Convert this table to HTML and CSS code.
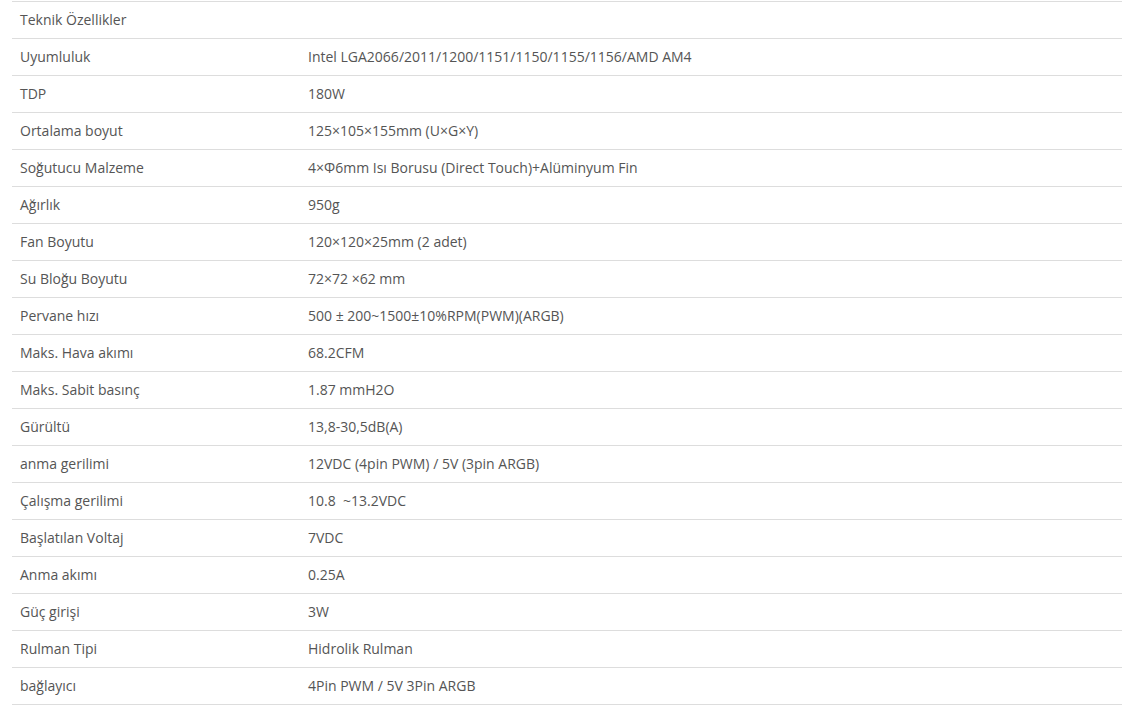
FILE: index.html
```html
<!DOCTYPE html>
<html lang="tr">

<head>
    <meta charset="UTF-8">
    <meta name="viewport" content="width=device-width, initial-scale=1.0">
    <link rel="stylesheet" href="styles.css">
    <title>Teknik Özellikler</title>
</head>

<body>
    <div class="specs">
        <table class="spectable">
            <tr><td>Teknik Özellikler</td><td></td></tr>
            <tr><td>Uyumluluk</td><td>Intel LGA2066/2011/1200/1151/1150/1155/1156/AMD AM4</td></tr>
            <tr><td>TDP</td><td>180W</td></tr>
            <tr><td>Ortalama boyut</td><td>125×105×155mm (U×G×Y)</td></tr>
            <tr><td>Soğutucu Malzeme</td><td>4×Φ6mm Isı Borusu (Direct Touch)+Alüminyum Fin</td></tr>
            <tr><td>Ağırlık</td><td>950g</td></tr>
            <tr><td>Fan Boyutu</td><td>120×120×25mm (2 adet)</td></tr>
            <tr><td>Su Bloğu Boyutu</td><td>72×72 ×62 mm</td></tr>
            <tr><td>Pervane hızı</td><td>500 ± 200~1500±10%RPM(PWM)(ARGB)</td></tr>
            <tr><td>Maks. Hava akımı</td><td>68.2CFM</td></tr>
            <tr><td>Maks. Sabit basınç</td><td>1.87 mmH2O</td></tr>
            <tr><td>Gürültü</td><td>13,8-30,5dB(A)</td></tr>
            <tr><td>anma gerilimi</td><td>12VDC (4pin PWM) / 5V (3pin ARGB)</td></tr>
            <tr><td>Çalışma gerilimi</td><td>10.8 &nbsp;~13.2VDC</td></tr>
            <tr><td>Başlatılan Voltaj</td><td>7VDC</td></tr>
            <tr><td>Anma akımı</td><td>0.25A</td></tr>
            <tr><td>Güç girişi</td><td>3W</td></tr>
            <tr><td>Rulman Tipi</td><td>Hidrolik Rulman</td></tr>
            <tr><td>bağlayıcı</td><td>4Pin PWM / 5V 3Pin ARGB</td></tr>
        </table>
    </div>
</body>

</html>
```
FILE: styles.css
```css
* {
    padding: 0;
    margin: 0;
}

body {
    background-color: white;
    font-family: "Open Sans", sans-serif;
    font-size: 14px;
    color: #555;
}

.specs {
    padding: 1px 9px 0 12px;
}

.spectable {
    width: 100%;
    border-collapse: collapse;
}

.spectable td {
    height: 34px;
    padding: 0 8px 2px;
    border-top: 1px solid #ddd;
    border-bottom: 1px solid #ddd;
    vertical-align: middle;
}

.spectable td:first-child {
    width: 272px;
}
```
